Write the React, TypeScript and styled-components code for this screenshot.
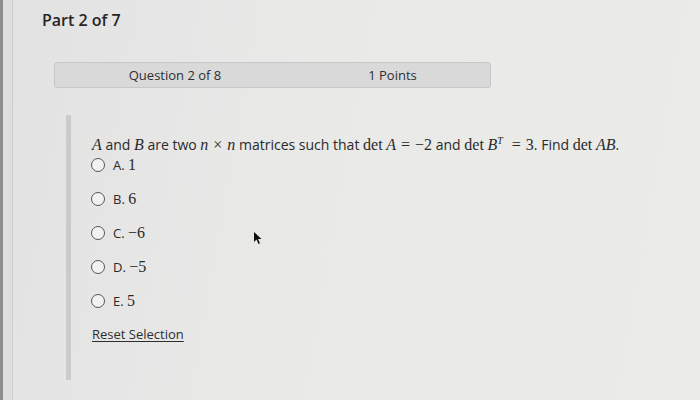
import React from "react";
import styled, { createGlobalStyle } from "styled-components";

const Global = createGlobalStyle`
  html, body { margin: 0; padding: 0; }
  body {
    width: 700px; height: 400px; overflow: hidden;
    background: linear-gradient(100deg, #e2e2e2 0%, #e9e9e8 40%, #ebebea 100%);
    font-family: "Open Sans", "Liberation Sans", sans-serif;
    color: #2c2c2c;
  }
`;

const Page = styled.div`
  position: relative;
  width: 700px;
  height: 400px;
  box-sizing: border-box;
  border-left: 3px solid #8e8e8e;
  display: flex;
`;

const Edge = styled.div`
  width: 9px;
  flex: none;
  background: #dedede;
  border-right: 1px solid #cfcfcf;
`;

const Main = styled.div`
  flex: 1;
  padding: 10px 0 0 29px;
`;

const PartTitle = styled.div`
  font-size: 16px;
  font-weight: 600;
  color: #262626;
  line-height: 20px;
`;

const HeaderBar = styled.div`
  margin: 32px 0 0 12px;
  width: 437px;
  height: 26px;
  box-sizing: border-box;
  background: #d9d9d9;
  border: 1px solid #c6c6c6;
  border-radius: 3px;
  display: grid;
  grid-template-columns: 240px 1fr;
  align-items: center;
  font-size: 13px;
  color: #2e2e2e;
`;

const HeaderCell = styled.div`
  text-align: center;
`;

const Panel = styled.div`
  margin: 27px 0 0 24px;
  height: 265px;
  box-sizing: border-box;
  border-left: 5px solid #cbcbcb;
  padding: 16px 0 0 21px;
`;

const Prompt = styled.div`
  font-size: 14px;
  line-height: 20px;
  color: #2a2a2a;
  white-space: nowrap;
`;

const M = styled.span<{ $it?: boolean }>`
  font-family: "Liberation Serif", "DejaVu Serif", serif;
  font-size: 16px;
  font-style: ${(p) => (p.$it ? "italic" : "normal")};
`;

const Rel = styled.span`
  font-family: "Liberation Serif", "DejaVu Serif", serif;
  font-size: 16px;
  margin: 0 5px;
`;

const Sup = styled.sup`
  font-family: "Liberation Serif", "DejaVu Serif", serif;
  font-style: italic;
  font-size: 10px;
  margin-right: 4px;
`;

const Options = styled.div`
  display: flex;
  flex-direction: column;
  gap: 14px;
`;

const Option = styled.label`
  display: flex;
  align-items: center;
  gap: 8px;
  height: 20px;
  font-size: 13px;
  color: #2a2a2a;
`;

const Radio = styled.span`
  width: 12px;
  height: 12px;
  border: 1.5px solid #555;
  border-radius: 50%;
  background: #f2f2f2;
  flex: none;
  margin-left: -1px;
`;

const Reset = styled.a`
  display: inline-block;
  margin-top: 14px;
  font-size: 13px;
  color: #2e2e2e;
  text-decoration: underline;
  text-underline-offset: 2px;
`;

const Cursor = styled.svg`
  position: absolute;
  left: 250px;
  top: 231px;
`;

const OptionLabel = styled.span``;

export default function App() {
  const opts: React.ReactNode[] = [
    <>A. <M>1</M></>,
    <>B. <M>6</M></>,
    <>C. <M>−6</M></>,
    <>D. <M>−5</M></>,
    <>E. <M>5</M></>,
  ];
  return (
    <>
      <Global />
      <Page>
        <Edge />
        <Main>
          <PartTitle>Part 2 of 7</PartTitle>
          <HeaderBar>
            <HeaderCell>Question 2 of 8</HeaderCell>
            <HeaderCell>1 Points</HeaderCell>
          </HeaderBar>
          <Panel>
            <Prompt>
              <M $it>A</M> and <M $it>B</M> are two <M $it>n</M>
              <Rel>×</Rel>
              <M $it>n</M> matrices such that <M>det</M> <M $it>A</M>
              <Rel>=</Rel>
              <M>−2</M> and <M>det</M> <M $it>B</M>
              <Sup>T</Sup>
              <Rel>=</Rel>
              <M>3</M>. Find <M>det</M> <M $it>AB</M>.
            </Prompt>
            <Options>
              {opts.map((o, i) => (
                <Option key={i}>
                  <Radio />
                  <OptionLabel>{o}</OptionLabel>
                </Option>
              ))}
            </Options>
            <Reset>Reset Selection</Reset>
          </Panel>
        </Main>
        <Cursor width="10" height="14" viewBox="0 0 10 14">
          <path d="M1 1 L1 11 L3.5 8.5 L5.5 13 L7 12.3 L5 8 L8.5 8 Z" fill="#111" />
        </Cursor>
      </Page>
    </>
  );
}
